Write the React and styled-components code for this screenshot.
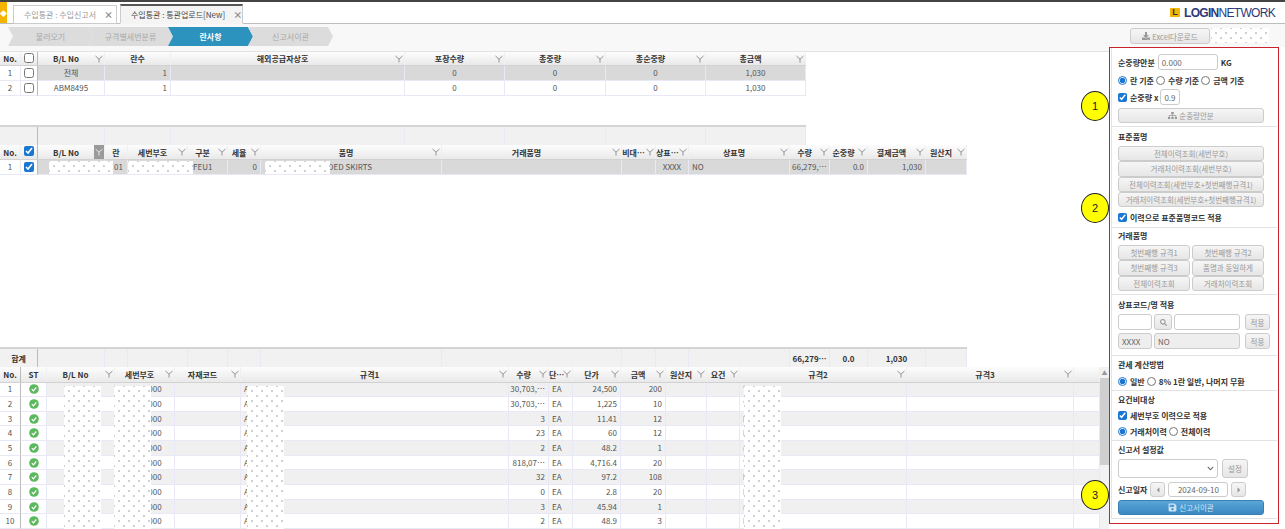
import React from "react";
import styled, { createGlobalStyle, css } from "styled-components";
import { FaDownload, FaSitemap, FaSave, FaSearch, FaCaretLeft, FaCaretRight, FaChevronDown } from "react-icons/fa";

const FONT = `"Noto Sans CJK KR", "Noto Sans", sans-serif`;

const Global = createGlobalStyle`
  html, body { margin: 0; padding: 0; height: 529px; overflow: hidden; background: #fff; }
  body { font-family: ${FONT}; font-size: 8px; color: #555; }
  * { box-sizing: border-box; }
`;

const dots = css`
  background-color: #fff;
  background-image: radial-gradient(#cdcdcd 0.7px, transparent 0.8px), radial-gradient(#cdcdcd 0.7px, transparent 0.8px);
  background-size: 10px 10px;
  background-position: 0 0, 5px 5px;
`;

const Page = styled.div`
  position: relative;
  width: 1285px;
  height: 529px;
  overflow: hidden;
  border-top: 2px solid #444;
`;

const TabBar = styled.div`
  height: 22px;
  display: flex;
  align-items: flex-end;
  border-bottom: 1px solid #bdbdbd;
  background: #fff;
`;
const Home = styled.div`
  width: 7px;
  height: 21px;
  background: #f5b400;
  color: #fff;
  font-size: 7px;
  display: flex;
  align-items: center;
  justify-content: flex-end;
  margin-right: 6px;
  overflow: hidden;
`;
const Tab = styled.div`
  width: ${(p) => p.$w}px;
  height: ${(p) => (p.$active ? 20 : 19)}px;
  margin-right: 3px;
  margin-bottom: -1px;
  padding-left: 10px;
  border: 1px solid #ccc;
  border-top: ${(p) => (p.$active ? "2px solid #555" : "1px solid #ccc")};
  border-bottom: ${(p) => (p.$active ? "1px solid #f4f4f4" : "1px solid #ccc")};
  background: ${(p) => (p.$active ? "#f4f4f4" : "#fff")};
  color: ${(p) => (p.$active ? "#444" : "#999")};
  font-size: 8px;
  display: flex;
  align-items: center;
  gap: 8px;
  white-space: nowrap;
`;
const TabClose = styled.span`
  color: #888;
  font-size: 9px;
  font-weight: 700;
`;
const Logo = styled.div`
  margin-left: auto;
  margin-right: 10px;
  height: 21px;
  display: flex;
  align-items: center;
  gap: 4px;
  font-family: "Liberation Sans", sans-serif;
  font-size: 12px;
  letter-spacing: -0.7px;
  color: #2c3a7c;
`;
const LogoMark = styled.span`
  width: 10px;
  height: 9px;
  background: #f2b705;
  color: #333;
  font-size: 9px;
  font-weight: 700;
  line-height: 9px;
  text-align: center;
  letter-spacing: 0;
`;
const LogoStrong = styled.b`
  font-weight: 700;
`;

const Content = styled.div`
  display: flex;
  height: 505px;
`;
const MainCol = styled.div`
  width: 1109px;
  flex: none;
  display: flex;
  flex-direction: column;
`;
const SideCol = styled.div`
  flex: 1;
  display: flex;
  flex-direction: column;
  background: linear-gradient(#f8f8f8 23px, #fff 23px);
`;

const StepBar = styled.div`
  height: 28px;
  flex: none;
  background: #f8f8f8;
  border-bottom: 1px solid #e2e2e2;
  display: flex;
  align-items: center;
  padding: 0 0 2px 8px;
`;
const Step = styled.div`
  width: 85px;
  height: 19px;
  margin-right: -5px;
  background: ${(p) => (p.$active ? "#2b93bd" : "#dcdcdc")};
  color: ${(p) => (p.$active ? "#fff" : "#aaa")};
  font-weight: ${(p) => (p.$active ? 700 : 400)};
  font-size: 8px;
  display: flex;
  align-items: center;
  justify-content: center;
  clip-path: polygon(0 0, calc(100% - 5px) 0, 100% 50%, calc(100% - 5px) 100%, 0 100%, 5px 50%);
`;

const GridArea = styled.div`
  position: relative;
  flex: none;
  height: ${(p) => p.$h}px;
  overflow: hidden;
`;
const Row = styled.div`
  display: grid;
  grid-template-columns: ${(p) => p.$cols};
  width: ${(p) => p.$w}px;
  height: ${(p) => p.$h}px;
`;
const HeadRow = styled(Row)`
  background: linear-gradient(#fdfdfd, #e9e9e9);
  border-bottom: 1px solid #d2d2d2;
`;
const HeadCell = styled.div`
  display: flex;
  align-items: center;
  min-width: 0;
  font-size: 8px;
  font-weight: 700;
  color: #333;
  white-space: nowrap;
  border-right: ${(p) => (p.$frozen ? "1px solid #bbb" : "1px solid #f0f0f0")};
`;
const HeadLabel = styled.span`
  flex: 1;
  text-align: center;
  min-width: 0;
`;
const FilterBox = styled.span`
  flex: none;
  width: 10px;
  height: 100%;
  display: flex;
  align-items: center;
  justify-content: center;
  background: ${(p) => (p.$on ? "#9a9a9a" : "transparent")};
  color: ${(p) => (p.$on ? "#eee" : "#888")};
`;
const Cell = styled.div`
  display: flex;
  align-items: center;
  justify-content: ${(p) => p.$align};
  min-width: 0;
  padding: 0 3px 0 ${(p) => 3 + (p.$indent || 0)}px;
  font-size: 8px;
  line-height: 1;
  color: #555;
  white-space: nowrap;
  overflow: hidden;
  background: ${(p) => (p.$frozen ? "#fff" : p.$bg)};
  border-right: 1px solid ${(p) => (p.$frozen === "edge" ? "#bbb" : "#e8e8f6")};
  border-bottom: 1px solid #e8e8f6;
`;
const GridCheck = styled.input.attrs({ type: "checkbox", readOnly: true })`
  width: 10px;
  height: 10px;
  margin: 0;
  accent-color: #1976d2;
`;
const Redact = styled.div`
  position: absolute;
  left: ${(p) => p.$x}px;
  top: ${(p) => p.$y}px;
  width: ${(p) => p.$w}px;
  height: ${(p) => p.$h}px;
  ${dots}
`;
const DotFill = styled.div`
  width: 58px;
  height: 15px;
  ${dots}
`;
const FootStrip = styled.div`
  flex: none;
  display: grid;
  grid-template-columns: ${(p) => p.$cols};
  width: ${(p) => p.$w}px;
  height: ${(p) => p.$h}px;
  background: #f1f1f1;
  border-top: 2px solid #d4d4d4;
`;
const FootCell = styled.div`
  display: flex;
  align-items: center;
  justify-content: ${(p) => p.$align};
  padding: 0 3px;
  font-size: 8px;
  font-weight: ${(p) => (p.$bold ? 700 : 400)};
  color: #333;
  border-right: 1px solid ${(p) => (p.$frozen ? "#bbb" : "#e8e8f6")};
  white-space: nowrap;
  overflow: hidden;
`;

const BottomGrid = styled.div`
  flex: 1;
  display: flex;
  min-height: 0;
`;
const BottomBody = styled.div`
  position: relative;
  width: 1100px;
  overflow: hidden;
`;
const Scrollbar = styled.div`
  width: 9px;
  background: #f2f2f2;
  display: flex;
  flex-direction: column;
  align-items: center;
`;
const ScrollUp = styled.div`
  height: 11px;
  flex: none;
  color: #999;
  font-size: 6px;
  line-height: 11px;
`;
const ScrollThumb = styled.div`
  width: 100%;
  height: 87px;
  background: #cfcfcf;
`;

const Panel = styled.div`
  width: 170px;
  height: 477px;
  border: 1px solid #c8222a;
  padding: 0 1px;
  flex: none;
  background: #fff;
  display: flex;
  flex-direction: column;
`;
const Section = styled.div`
  height: ${(p) => p.$h}px;
  flex: none;
  padding: ${(p) => p.$pt}px 0 0 6px;
  border-left: 1px solid #e4e4e4;
  border-bottom: 1px solid #e2e2e2;
  display: flex;
  flex-direction: column;
`;
const ExcelRow = styled.div`
  height: 23px;
  flex: none;
  display: flex;
  padding: 4px 0 0 21px;
  gap: 1px;
`;
const Btn = styled.button`
  width: ${(p) => (p.$w ? `${p.$w}px` : "auto")};
  height: ${(p) => p.$h || 15.3}px;
  flex: ${(p) => (p.$w ? "none" : "1")};
  margin-left: ${(p) => p.$ml || 0}px;
  padding: 0;
  font-family: ${FONT};
  font-size: 7.5px;
  color: #999;
  white-space: nowrap;
  background: linear-gradient(#f6f6f6, #e6e6e6);
  border: 1px solid #ccc;
  border-radius: 3px;
  display: inline-flex;
  align-items: center;
  justify-content: center;
  gap: 2px;
`;
const WideBtn = styled(Btn)`
  flex: none;
  width: 146px;
  margin-top: ${(p) => p.$mt || 0}px;
`;
const PrimaryBtn = styled(WideBtn)`
  height: 15px;
  background: linear-gradient(#5aa6d8, #3a87c2);
  border-color: #3a7fb4;
  color: #cfe4f3;
  margin-top: 3px;
`;
const Stack = styled.div`
  display: flex;
  flex-direction: column;
`;
const BtnGrid = styled.div`
  display: grid;
  grid-template-columns: 72px 72px;
  column-gap: 2px;
  width: 146px;
`;
const Title = styled.div`
  height: 12px;
  line-height: 12px;
  margin-bottom: ${(p) => p.$mb ?? 3}px;
  font-size: 8px;
  font-weight: 700;
  color: #333;
`;
const Line = styled.div`
  display: flex;
  align-items: center;
  height: ${(p) => p.$h}px;
  margin-top: ${(p) => p.$mt || 0}px;
  gap: ${(p) => p.$gap ?? 2}px;
  font-size: 8px;
  font-weight: 700;
  color: #333;
  white-space: nowrap;
`;
const Opt = styled.span`
  display: inline-flex;
  align-items: center;
  gap: 3px;
`;
const Radio = styled.input.attrs({ type: "radio", readOnly: true })`
  width: 9px;
  height: 9px;
  margin: 0;
  accent-color: #1976d2;
`;
const Check = styled.input.attrs({ type: "checkbox", readOnly: true })`
  width: 9px;
  height: 9px;
  margin: 0 1px 0 0;
  accent-color: #1976d2;
`;
const Field = styled.div`
  width: ${(p) => p.$w}px;
  height: ${(p) => p.$h || 16}px;
  flex: none;
  border: 1px solid #ccc;
  border-radius: 3px;
  background: ${(p) => (p.$off ? "#eee" : "#fff")};
  color: #666;
  font-size: 8px;
  font-weight: 400;
  padding: 0 3px;
  display: flex;
  align-items: center;
  justify-content: ${(p) => (p.$center ? "center" : "space-between")};
`;
const Marker = styled.div`
  position: absolute;
  left: 1081px;
  top: ${(p) => p.$y}px;
  width: 28px;
  height: 30px;
  border-radius: 50%;
  background: #ffff00;
  border: 1px solid #222;
  display: flex;
  align-items: center;
  justify-content: center;
  font-family: "Liberation Sans", sans-serif;
  font-size: 11px;
  color: #222;
`;
const StatusIcon = styled.svg`
  width: 10px;
  height: 10px;
`;

const cols = (list) => list.map((c) => `${c.w}px`).join(" ");
const Funnel = () => (
  <svg width="8" height="8" viewBox="0 0 8 8" fill="none" stroke="currentColor" strokeWidth="0.9">
    <path d="M0.5 1 L4 4.2 L7.5 1 M4 4.2 V7.5" />
  </svg>
);
const Head = ({ columns, w, h }) => (
  <HeadRow $cols={cols(columns)} $w={w} $h={h}>
    {columns.map((c, i) => (
      <HeadCell key={i} $frozen={c.edge}>
        {c.check !== undefined ? (
          <HeadLabel><GridCheck checked={c.check} /></HeadLabel>
        ) : (
          <HeadLabel>{c.label}</HeadLabel>
        )}
        {c.filter && <FilterBox $on={c.active}><Funnel /></FilterBox>}
      </HeadCell>
    ))}
  </HeadRow>
);
const DataRow = ({ columns, w, h, bg, values }) => (
  <Row $cols={cols(columns)} $w={w} $h={h}>
    {columns.map((c, i) => (
      <Cell key={i} $bg={bg} $indent={c.indent} $frozen={c.edge ? "edge" : c.frozen ? "plain" : undefined} $align={c.align || "flex-start"}>
        {values[i]}
      </Cell>
    ))}
  </Row>
);

const R = "flex-end", C = "center";

const grid1 = [
  { label: "No.", w: 21, align: C, frozen: true },
  { check: false, w: 17, align: C, edge: true },
  { label: "B/L No", w: 67, filter: true, align: C },
  { label: "란수", w: 66, align: R },
  { label: "해외공급자상호", w: 234, filter: true },
  { label: "포장수량", w: 100, filter: true, align: C },
  { label: "총중량", w: 101, filter: true, align: C },
  { label: "총순중량", w: 100, filter: true, align: C },
  { label: "총금액", w: 100, filter: true, align: C },
];
const grid2 = [
  { label: "No.", w: 21, align: C, frozen: true },
  { check: true, w: 17, align: C, edge: true },
  { label: "B/L No", w: 67, filter: true, active: true },
  { label: "란", w: 23, indent: 6 },
  { label: "세번부호", w: 60, filter: true },
  { label: "구분", w: 40, filter: true, indent: 2 },
  { label: "세율", w: 33, filter: true, align: R },
  { label: "품명", w: 181, filter: true, indent: 64 },
  { label: "거래품명", w: 180, filter: true },
  { label: "비대…", w: 34, filter: true },
  { label: "상표…", w: 33, filter: true, align: C },
  { label: "상표명", w: 101, filter: true },
  { label: "수량", w: 40, filter: true, indent: -1 },
  { label: "순중량", w: 38, filter: true, align: R },
  { label: "결제금액", w: 58, filter: true, align: R },
  { label: "원산지", w: 41, filter: true },
];
const grid3 = [
  { label: "No.", w: 21, align: C, frozen: true, edge: true },
  { label: "ST", w: 26, align: C, frozen: true },
  { label: "B/L No", w: 68, filter: true },
  { label: "세번부호", w: 60, filter: true, indent: 17 },
  { label: "자재코드", w: 66, filter: true },
  { label: "규격1", w: 268, filter: true },
  { label: "수량", w: 40, filter: true, align: R, indent: -2 },
  { label: "단…", w: 24, filter: true },
  { label: "단가", w: 48, filter: true, align: R },
  { label: "금액", w: 45, filter: true, align: R },
  { label: "원산지", w: 41, filter: true },
  { label: "요건", w: 33, filter: true },
  { label: "규격2", w: 167, filter: true },
  { label: "규격3", w: 167, filter: true },
  { label: "", w: 26 },
];

const Ok = () => (
  <StatusIcon viewBox="0 0 10 10">
    <circle cx="5" cy="5" r="4.8" fill="#5cb85c" />
    <path d="M2.8 5.2 L4.4 6.8 L7.3 3.5" fill="none" stroke="#fff" strokeWidth="1.2" />
  </StatusIcon>
);

const items = [
  ["30,703,…", "24,500", "200", "'"],
  ["30,703,…", "1,225", "10", "'"],
  ["3", "11.41", "12", "I"],
  ["23", "60", "12", "I"],
  ["2", "48.2", "1", "("],
  ["818,07…", "4,716.4", "20", "'"],
  ["32", "97.2", "108", "I"],
  ["0", "2.8", "20", "I"],
  ["3", "45.94", "1", "("],
  ["2", "48.9", "3", "I"],
];

const foot2 = [38, 67, 23, 60, 40, 33, 181, 180, 34, 33, 101, 40, 38, 58, 41].map((w) => `${w}px`).join(" ");
const foot1 = [38, 67, 66, 234, 100, 101, 100, 100].map((w) => `${w}px`).join(" ");

export default function App() {
  return (
    <Page>
      <Global />
      <TabBar>
        <Home>◆</Home>
        <Tab $w={104}>수입통관 : 수입신고서 <TabClose>×</TabClose></Tab>
        <Tab $w={123} $active>수입통관 : 통관업로드[New] <TabClose>×</TabClose></Tab>
        <Logo>
          <LogoMark>L</LogoMark>
          <span><LogoStrong>LOGIN</LogoStrong>NETWORK</span>
        </Logo>
      </TabBar>
      <Content>
        <MainCol>
          <StepBar>
            <Step>불러오기</Step>
            <Step>규격별세번분류</Step>
            <Step $active>란사항</Step>
            <Step>신고서이관</Step>
          </StepBar>
          <GridArea $h={73}>
            <Head columns={grid1} w={806} h={14} />
            <DataRow columns={grid1} w={806} h={15} bg="#d9d9d9" values={["1", <GridCheck key="c" />, "전체", "1", "", "0", "0", "0", "1,030"]} />
            <DataRow columns={grid1} w={806} h={15} bg="#fff" values={["2", <GridCheck key="c" />, "ABM8495", "1", "", "0", "0", "0", "1,030"]} />
          </GridArea>
          <FootStrip $cols={foot1} $w={806} $h={20}>
            <FootCell $frozen $align={C} />
            {[...Array(7)].map((_, i) => <FootCell key={i} />)}
          </FootStrip>
          <GridArea $h={202}>
            <Head columns={grid2} w={967} h={15} />
            <DataRow columns={grid2} w={967} h={15} bg="#d9d9d9" values={["1", <GridCheck key="c" checked />, "", "01", "", "FEU1", "0", "DED SKIRTS", "", "", "XXXX", "NO", "66,279,…", "0.0", "1,030", ""]} />
            <Redact $x={49} $y={16} $w={64} $h={13} />
            <Redact $x={128} $y={16} $w={65} $h={13} />
            <Redact $x={265} $y={16} $w={65} $h={13} />
          </GridArea>
          <FootStrip $cols={foot2} $w={967} $h={20}>
            <FootCell $frozen $bold $align={C}>합계</FootCell>
            {[...Array(10)].map((_, i) => <FootCell key={i} />)}
            <FootCell $bold $align={C}>66,279…</FootCell>
            <FootCell $bold $align={C}>0.0</FootCell>
            <FootCell $bold $align={C}>1,030</FootCell>
            <FootCell />
          </FootStrip>
          <BottomGrid>
            <BottomBody>
              <Head columns={grid3} w={1100} h={15.5} />
              {items.map((it, i) => (
                <DataRow
                  key={i}
                  columns={grid3}
                  w={1100}
                  h={14.67}
                  bg={i % 2 === 0 ? "#f0f0f0" : "#fff"}
                  values={[String(i + 1), <Ok key="s" />, "", "000000", "", "A", it[0], "EA", it[1], it[2], "", "", it[3], "", ""]}
                />
              ))}
              <Redact $x={64} $y={19} $w={37} $h={150} />
              <Redact $x={114} $y={19} $w={37} $h={150} />
              <Redact $x={247} $y={19} $w={37} $h={150} />
              <Redact $x={744} $y={19} $w={37} $h={150} />
            </BottomBody>
            <Scrollbar>
              <ScrollUp>▲</ScrollUp>
              <ScrollThumb />
            </Scrollbar>
          </BottomGrid>
        </MainCol>
        <SideCol>
          <ExcelRow>
            <Btn $w={80} $h={16}><FaDownload size={8} /> Excel다운로드</Btn>
            <DotFill />
          </ExcelRow>
          <Panel>
            <Section $h={79} $pt={6}>
              <Line $h={16} $gap={3}>
                순중량안분 <Field $w={60}>0.000</Field> KG
              </Line>
              <Line $h={14} $mt={3}>
                <Opt><Radio name="a" checked /> 란 기준</Opt>
                <Opt><Radio name="a" /> 수량 기준</Opt>
                <Opt><Radio name="a" /> 금액 기준</Opt>
              </Line>
              <Line $h={16} $mt={2} $gap={2}>
                <Check checked /> 순중량 x <Field $w={20}>0.9</Field>
              </Line>
              <WideBtn $h={15} $mt={3}><FaSitemap size={9} /> 순중량안분</WideBtn>
            </Section>
            <Section $h={101} $pt={4}>
              <Title>표준품명</Title>
              <Stack>
                <WideBtn>전체이력조회(세번부호)</WideBtn>
                <WideBtn>거래처이력조회(세번부호)</WideBtn>
                <WideBtn>전체이력조회(세번부호+첫번째행규격1)</WideBtn>
                <WideBtn>거래처이력조회(세번부호+첫번째행규격1)</WideBtn>
              </Stack>
              <Line $h={14} $mt={3}><Check checked /> 이력으로 표준품명코드 적용</Line>
            </Section>
            <Section $h={67} $pt={2}>
              <Title>거래품명</Title>
              <BtnGrid>
                <Btn>첫번째행 규격1</Btn>
                <Btn>첫번째행 규격2</Btn>
                <Btn>첫번째행 규격3</Btn>
                <Btn>품명과 동일하게</Btn>
                <Btn>전체이력조회</Btn>
                <Btn>거래처이력조회</Btn>
              </BtnGrid>
            </Section>
            <Section $h={61} $pt={4}>
              <Title>상표코드/명 적용</Title>
              <Line $h={16}>
                <Field $w={34} />
                <Btn $w={18} $h={16}><FaSearch size={7} /></Btn>
                <Field $w={66} />
                <Btn $w={25} $h={16} $ml={3}>적용</Btn>
              </Line>
              <Line $h={16} $mt={3}>
                <Field $w={34} $off>XXXX</Field>
                <Field $w={86} $off>NO</Field>
                <Btn $w={25} $h={16} $ml={3}>적용</Btn>
              </Line>
            </Section>
            <Section $h={35} $pt={3}>
              <Title>관세 계산방법</Title>
              <Line $h={14}>
                <Opt><Radio name="b" checked /> 일반</Opt>
                <Opt><Radio name="b" /> 8% 1란 일반, 나머지 무환</Opt>
              </Line>
            </Section>
            <Section $h={50} $pt={3}>
              <Title $mb={2}>요건비대상</Title>
              <Line $h={14}><Check checked /> 세번부호 이력으로 적용</Line>
              <Line $h={14} $mt={2}>
                <Opt><Radio name="c" checked /> 거래처이력</Opt>
                <Opt><Radio name="c" /> 전체이력</Opt>
              </Line>
            </Section>
            <Section $h={78} $pt={3}>
              <Title>신고서 설정값</Title>
              <Line $h={19} $gap={4}>
                <Field $w={100} $h={19}><span /><FaChevronDown size={7} color="#666" /></Field>
                <Btn $w={26} $h={19}>설정</Btn>
              </Line>
              <Line $h={15} $mt={4} $gap={3}>
                신고일자
                <Btn $w={15} $h={15}><FaCaretLeft size={8} /></Btn>
                <Field $w={60} $h={15} $center>2024-09-10</Field>
                <Btn $w={15} $h={15}><FaCaretRight size={8} /></Btn>
              </Line>
              <PrimaryBtn><FaSave size={9} /> 신고서이관</PrimaryBtn>
            </Section>
          </Panel>
        </SideCol>
      </Content>
      <Marker $y={89}>1</Marker>
      <Marker $y={191}>2</Marker>
      <Marker $y={478}>3</Marker>
    </Page>
  );
}
